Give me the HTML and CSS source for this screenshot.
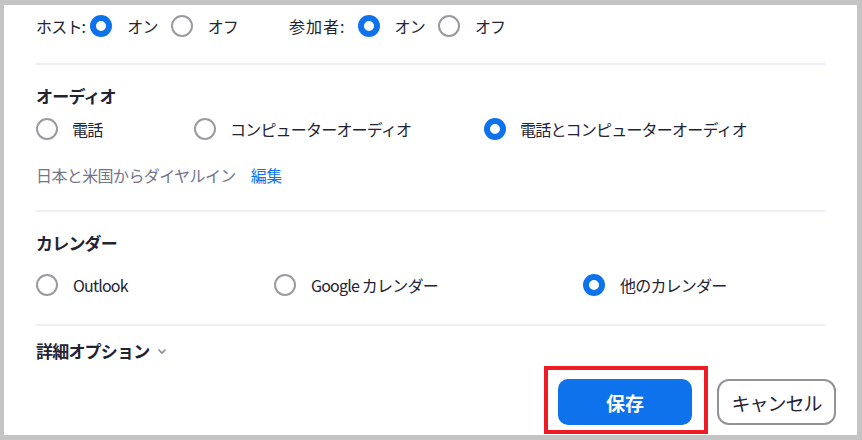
FILE: index.html
```html
<!DOCTYPE html>
<html lang="ja">
<head>
    <meta charset="UTF-8">
    <meta name="viewport" content="width=device-width, initial-scale=1.0">
    <title>ミーティング設定</title>
    <link rel="stylesheet" href="styles.css">
</head>
<body>
    <div class="panel">
        <div class="video-row">
            <span class="field-label">ホスト:</span>
            <label class="radio"><span class="dot on"></span>オン</label>
            <label class="radio"><span class="dot"></span>オフ</label>
            <span class="field-label second">参加者:</span>
            <label class="radio"><span class="dot on"></span>オン</label>
            <label class="radio"><span class="dot"></span>オフ</label>
        </div>

        <div class="divider"></div>

        <h3 class="section-title">オーディオ</h3>
        <div class="options audio">
            <label class="radio"><span class="dot"></span>電話</label>
            <label class="radio"><span class="dot"></span>コンピューターオーディオ</label>
            <label class="radio"><span class="dot on"></span>電話とコンピューターオーディオ</label>
        </div>
        <p class="dial-in">日本と米国からダイヤルイン<a href="#">編集</a></p>

        <div class="divider"></div>

        <h3 class="section-title">カレンダー</h3>
        <div class="options calendar">
            <label class="radio"><span class="dot"></span>Outlook</label>
            <label class="radio"><span class="dot"></span>Google カレンダー</label>
            <label class="radio"><span class="dot on"></span>他のカレンダー</label>
        </div>

        <div class="divider last"></div>

        <h3 class="section-title advanced">詳細オプション
            <svg class="chevron" width="10" height="7" viewBox="0 0 10 7"><path d="M1.5 1.5 L5 5 L8.5 1.5" fill="none" stroke="#8a8a99" stroke-width="1.6"/></svg>
        </h3>

        <div class="footer">
            <span class="highlight"><button class="btn primary">保存</button></span>
            <button class="btn secondary">キャンセル</button>
        </div>
    </div>
</body>
</html>
```

FILE: styles.css
```css
body {
    margin: 0;
    background-color: #c4c4c4;
    font-family: "Noto Sans CJK JP", "Noto Sans", sans-serif;
    color: #232333;
}
.panel {
    margin: 5px 5px 5px 4px;
    height: 430px;
    background-color: white;
    padding: 0 32px;
    box-sizing: border-box;
}
.video-row {
    display: flex;
    align-items: center;
    height: 22px;
    padding-top: 10px;
    margin-bottom: 26px;
    font-size: 16px;
    letter-spacing: -0.8px;
}
.field-label {
    margin-right: 5px;
}
.field-label.second {
    margin-left: 38px;
    margin-right: 12px;
    letter-spacing: 1px;
}
.radio {
    display: inline-flex;
    align-items: center;
    font-size: 16px;
    line-height: 22px;
    letter-spacing: -0.8px;
    white-space: nowrap;
}
.video-row .radio {
    margin-right: 13px;
}
.dot {
    width: 22px;
    height: 22px;
    box-sizing: border-box;
    border: 2px solid #9b9b9f;
    border-radius: 50%;
    margin-right: 14px;
    flex: none;
}
.video-row .dot {
    margin-right: 15px;
}
.dot.on {
    border: 6px solid #0e72ed;
}
.divider {
    height: 2px;
    background-color: #ededf4;
}
.section-title {
    margin: 19px 0 0;
    font-size: 17px;
    line-height: 24px;
    font-weight: bold;
    letter-spacing: -0.8px;
}
.options {
    display: grid;
    margin-top: 10px;
}
.options.audio {
    grid-template-columns: 158px 290px auto;
}
.options.calendar {
    margin-top: 19px;
    grid-template-columns: 238px 309px auto;
}
.options.calendar .dot {
    margin-right: 15px;
}
.dial-in {
    margin: 24px 0 24px;
    font-size: 16px;
    line-height: 22px;
    letter-spacing: -0.6px;
    color: #747487;
}
.dial-in a {
    color: #0e72ed;
    text-decoration: none;
    margin-left: 15px;
}
.divider.last {
    margin-top: 28px;
}
.section-title.advanced {
    margin-top: 13px;
    display: flex;
    align-items: center;
}
.chevron {
    margin-left: 8px;
}
.footer {
    display: flex;
    justify-content: flex-end;
    align-items: flex-start;
    margin-top: 3px;
    margin-right: -11px;
}
.highlight {
    display: inline-block;
    border: 4px solid #ed1c24;
    padding: 9px 12px 5px 10px;
    margin-right: 9px;
}
.btn {
    height: 46px;
    font-family: "Noto Sans CJK JP", sans-serif;
    font-size: 19px;
    cursor: pointer;
}
.btn.primary {
    display: block;
    width: 134px;
    background-color: #0e72ed;
    color: white;
    font-weight: bold;
    border: none;
    border-radius: 10px;
}
.btn.secondary {
    width: 119px;
    margin-top: 13px;
    background-color: white;
    color: #232333;
    border: 2px solid #929298;
    border-radius: 12px;
    letter-spacing: -1px;
}
```
